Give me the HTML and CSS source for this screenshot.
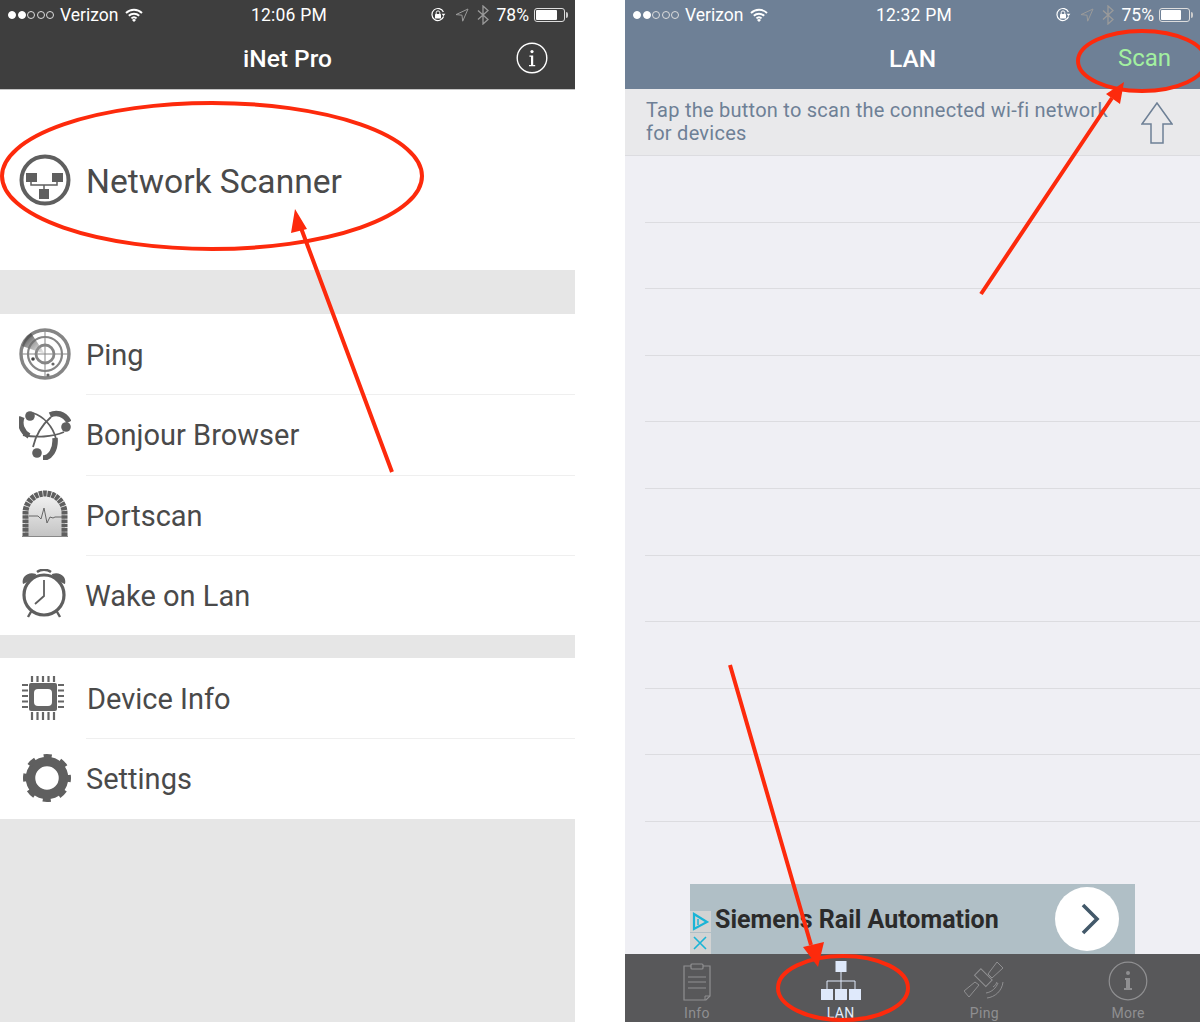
FILE: index.html
```html
<!DOCTYPE html>
<html lang="en">
<head>
    <meta charset="UTF-8">
    <title>iNet Pro</title>
    <link rel="stylesheet" href="styles.css">
</head>
<body>
    <svg class="defs" width="0" height="0">
        <symbol id="wifi" viewBox="0 0 18 14">
            <path d="M1 5a11.500 11.500 0 0 1 16 0M3.800 7.800a7.600 7.600 0 0 1 10.400 0M6.400 10.400a3.800 3.800 0 0 1 5.200 0" fill="none" stroke="currentColor" stroke-width="1.900"/>
            <path d="M9 14l-2-2a2.800 2.800 0 0 1 4 0z" fill="currentColor"/>
        </symbol>
        <symbol id="lock" viewBox="0 0 16 16">
            <path d="M13.600 9.500A6 6 0 1 1 13.400 5" fill="none" stroke="currentColor" stroke-width="1.200"/>
            <path d="M11.600 6.800h3.800l-1.900 2.400z" fill="currentColor"/>
            <rect x="5" y="7" width="6" height="4.600" rx=".6" fill="currentColor"/>
            <path d="M6.200 7V5.700a1.800 1.800 0 0 1 3.600 0V7" fill="none" stroke="currentColor"/>
        </symbol>
        <symbol id="locate" viewBox="0 0 14 14">
            <path d="M13 1L1 6.600l6 .6.700 6z" fill="none" stroke="currentColor"/>
        </symbol>
        <symbol id="bt" viewBox="0 0 12 20">
            <path d="M1 5.500l10 9-5 4.500V1l5 4.500-10 9" fill="none" stroke="currentColor" stroke-width="1.300"/>
        </symbol>
    </svg>

    <main class="shots">
        <section class="phone">
            <header class="top top-dark">
                <div class="status">
                    <div class="status-left">
                        <span class="dots"><i class="on"></i><i class="on"></i><i></i><i></i><i></i></span>
                        <span>Verizon</span>
                        <svg class="wifi"><use href="#wifi"/></svg>
                    </div>
                    <div class="status-time">12:06 PM</div>
                    <div class="status-right">
                        <svg class="ic-lock"><use href="#lock"/></svg>
                        <svg class="ic-locate"><use href="#locate"/></svg>
                        <svg class="ic-bt"><use href="#bt"/></svg>
                        <span>78%</span>
                        <span class="battery"><b style="width: 78%"></b></span>
                    </div>
                </div>
                <div class="nav">
                    <h1>iNet Pro</h1>
                    <svg class="nav-info" viewBox="0 0 32 32">
                        <circle cx="16" cy="16" r="14.800" fill="none" stroke="#fff" stroke-width="1.400"/>
                        <circle cx="16" cy="9.600" r="1.600" fill="#fff"/>
                        <path d="M13.400 13.600h3.800v9.400h2v1.200h-6.200V23h2v-8.200h-1.600z" fill="#fff"/>
                    </svg>
                </div>
            </header>

            <div class="scanner-row">
                <svg class="icon" viewBox="0 0 52 52">
                    <circle cx="26" cy="26" r="23.500" fill="none" stroke="#5f5f5f" stroke-width="4"/>
                    <path d="M12 24v7h26v-7M25 31v5" fill="none" stroke="#5f5f5f" stroke-width="1.500"/>
                    <rect x="7" y="19" width="11" height="9" fill="#5f5f5f"/>
                    <rect x="33" y="19" width="11" height="9" fill="#5f5f5f"/>
                    <rect x="20" y="35" width="10" height="10" fill="#5f5f5f"/>
                </svg>
                <span>Network Scanner</span>
            </div>

            <div class="gap gap-big"></div>

            <ul class="menu">
                <li>
                    <svg class="icon" viewBox="0 0 52 52">
                        <defs>
                            <linearGradient id="sweep" x1="0" y1="0" x2="1" y2="1">
                                <stop offset="0" stop-color="#2c2c2c"/>
                                <stop offset="1" stop-color="#bbb" stop-opacity=".3"/>
                            </linearGradient>
                            <linearGradient id="tunnel" x1="0" y1="0" x2="0" y2="1">
                                <stop offset="0" stop-color="#f4f4f4"/>
                                <stop offset="1" stop-color="#c4c4c4"/>
                            </linearGradient>
                        </defs>
                        <g fill="none" stroke="#858585">
                            <circle cx="26" cy="26" r="24" stroke-width="3.400"/>
                            <circle cx="26" cy="26" r="17" stroke-width="2.200"/>
                            <circle cx="26" cy="26" r="9" stroke-width="2.800"/>
                            <path d="M26 2v48M2 26h48" stroke-width="1"/>
                        </g>
                        <path d="M26 26L3 18a25 25 0 0 1 9-13z" fill="url(#sweep)"/>
                        <circle cx="14" cy="31" r="1.800" fill="#444"/>
                        <circle cx="34" cy="36" r="1.600" fill="#666"/>
                        <circle cx="29" cy="47" r="1.600" fill="#666"/>
                    </svg>
                    <span>Ping</span>
                </li>
                <li>
                    <svg class="icon" viewBox="0 0 52 52">
                        <g fill="none" stroke="#5f5f5f">
                            <path d="M3 9C0 16 3 24 10 28M31 7c6-3 14-2 19 7M24 50c7 0 13-8 12-20" stroke-width="5.500"/>
                            <path d="M14 5c10 3 20 13 23 26M32 9C24 16 17 26 14 39M4 27c13 3 29 2 41-3" stroke-width="1.800"/>
                        </g>
                        <circle cx="11" cy="8" r="4.800" fill="#5f5f5f"/>
                        <circle cx="47" cy="19" r="4.800" fill="#5f5f5f"/>
                        <circle cx="18" cy="45" r="4.800" fill="#5f5f5f"/>
                    </svg>
                    <span>Bonjour Browser</span>
                </li>
                <li>
                    <svg class="icon" viewBox="0 0 52 52">
                        <path d="M6 47V24a20 20 0 0 1 40 0v23z" fill="url(#tunnel)"/>
                        <path d="M6.500 47V24a19.500 19.500 0 0 1 39 0v23" fill="none" stroke="#5f5f5f" stroke-width="6" stroke-dasharray="3.600 .7"/>
                        <path d="M3 47.500h46" stroke="#888" stroke-width="1"/>
                        <path d="M10 27h9l3 3 3-11 3 15 3-6 3 1 2-1h8" fill="none" stroke="#666"/>
                    </svg>
                    <span>Portscan</span>
                </li>
                <li class="row-wake">
                    <svg class="icon" viewBox="0 0 52 52">
                        <circle cx="25" cy="26" r="20" fill="none" stroke="#5f5f5f" stroke-width="3.200"/>
                        <path d="M25 11v16l-9 8" fill="none" stroke="#5f5f5f" stroke-width="1.800"/>
                        <path d="M4 15c-2-7 5-13 13-10 1 1-9 9-13 10zM46 15c2-7-5-13-13-10-1 1 9 9 13 10z" fill="#5f5f5f"/>
                        <path d="M18 3c4-3 10-3 14 0M13 41l-4 7M37 41l4 7" fill="none" stroke="#5f5f5f" stroke-width="2.400"/>
                    </svg>
                    <span>Wake on Lan</span>
                </li>
            </ul>

            <div class="gap gap-small"></div>

            <ul class="menu">
                <li class="row-device">
                    <svg class="icon" viewBox="0 0 52 52">
                        <path d="M13 4v44M18.500 4v44M24 4v44M29.500 4v44M35 4v44M3 13h42M3 18.500h42M3 24h42M3 29.500h42M3 35h42" stroke="#666" stroke-width="2.200"/>
                        <rect x="9" y="10" width="30" height="30" rx="2" fill="#fff"/>
                        <rect x="10" y="11" width="28" height="28" rx="2" fill="#666"/>
                        <rect x="15" y="17" width="18" height="17" rx="4" fill="#fff"/>
                    </svg>
                    <span>Device Info</span>
                </li>
                <li>
                    <svg class="icon" viewBox="0 0 52 52">
                        <circle cx="28" cy="26" r="16.500" fill="none" stroke="#5f5f5f" stroke-width="9.500"/>
                        <circle cx="28" cy="26" r="21.500" fill="none" stroke="#5f5f5f" stroke-width="5" stroke-dasharray="8 8.890" stroke-dashoffset="4"/>
                    </svg>
                    <span>Settings</span>
                </li>
            </ul>

            <div class="gap gap-fill"></div>
        </section>

        <section class="phone phone-lan">
            <header class="top top-blue">
                <div class="status">
                    <div class="status-left">
                        <span class="dots"><i class="on"></i><i class="on"></i><i></i><i></i><i></i></span>
                        <span>Verizon</span>
                        <svg class="wifi"><use href="#wifi"/></svg>
                    </div>
                    <div class="status-time">12:32 PM</div>
                    <div class="status-right">
                        <svg class="ic-lock"><use href="#lock"/></svg>
                        <svg class="ic-locate"><use href="#locate"/></svg>
                        <svg class="ic-bt"><use href="#bt"/></svg>
                        <span>75%</span>
                        <span class="battery"><b style="width: 75%"></b></span>
                    </div>
                </div>
                <div class="nav">
                    <h1>LAN</h1>
                    <span class="scan-btn">Scan</span>
                </div>
            </header>

            <div class="hint">
                <p>Tap the button to scan the connected wi-fi network for devices</p>
                <svg class="hint-arrow" viewBox="0 0 32 42">
                    <path d="M16 1L1 22h9v19h12V22h9z" fill="none" stroke="#6e8096" stroke-width="1.500"/>
                </svg>
            </div>

            <div class="lan-list">
                <div class="lan-row"></div>
                <div class="lan-row"></div>
                <div class="lan-row"></div>
                <div class="lan-row"></div>
                <div class="lan-row"></div>
                <div class="lan-row"></div>
                <div class="lan-row"></div>
                <div class="lan-row"></div>
                <div class="lan-row"></div>
                <div class="lan-row"></div>

                <div class="ad">
                    <div class="ad-choices">
                        <span class="ad-box">
                            <svg viewBox="0 0 20 20" width="20" height="20">
                                <path d="M4 3l13 8-13 7z" fill="none" stroke="#19b4d6" stroke-width="2.200"/>
                                <path d="M8 8v6" stroke="#19b4d6" stroke-width="1.500"/>
                            </svg>
                        </span>
                        <span class="ad-box">
                            <svg viewBox="0 0 20 20" width="20" height="20">
                                <path d="M4 4l12 12M16 4L4 16" stroke="#19b4d6" stroke-width="1.600"/>
                            </svg>
                        </span>
                    </div>
                    <span class="ad-title">Siemens Rail Automation</span>
                    <span class="ad-go">
                        <svg class="ad-chevron" viewBox="0 0 20 32" width="20" height="32">
                            <path d="M3 2l14 14L3 30" fill="none" stroke="#43596a" stroke-width="3.600"/>
                        </svg>
                    </span>
                </div>
            </div>

            <nav class="tabs">
                <div class="tab">
                    <svg viewBox="0 0 30 38" width="30" height="38">
                        <path d="M9 3H2v34h22l4-4V3h-7" fill="none" stroke="currentColor" stroke-width="1.200"/>
                        <rect x="9" y="1" width="12" height="5" rx="1" fill="none" stroke="currentColor" stroke-width="1.200"/>
                        <path d="M6 14h18M6 19h18M6 25h18" stroke="currentColor" stroke-width="1.200"/>
                        <path d="M23 37v-4h5" fill="none" stroke="currentColor"/>
                    </svg>
                    <span>Info</span>
                </div>
                <div class="tab tab-on">
                    <svg viewBox="0 0 40 40" width="40" height="40">
                        <rect x="14.500" y="0" width="11" height="11" fill="#dfe9fb"/>
                        <path d="M20 11v18M6 28v-8h28v8" fill="none" stroke="#dfe9fb" stroke-width="1"/>
                        <rect x="0" y="28" width="12" height="11" fill="#dfe9fb"/>
                        <rect x="14" y="28" width="12" height="11" fill="#dfe9fb"/>
                        <rect x="28" y="28" width="12" height="11" fill="#dfe9fb"/>
                    </svg>
                    <span>LAN</span>
                </div>
                <div class="tab">
                    <svg viewBox="0 0 40 40" width="40" height="40">
                        <path d="M24 13L33 1l6 6-11 10zM15 24L5 36l-5-6 11-9z" fill="none" stroke="currentColor" stroke-width="1"/>
                        <rect x="11" y="12" width="16" height="9" transform="rotate(45 19 17)" fill="none" stroke="currentColor" stroke-width="1"/>
                        <path d="M29 26a8 8 0 0 0 4-5M23 37c8-1 15-7 16-16M22 32c6-1 10-5 12-10" fill="none" stroke="currentColor" stroke-width="1"/>
                    </svg>
                    <span>Ping</span>
                </div>
                <div class="tab">
                    <svg viewBox="0 0 40 40" width="40" height="40">
                        <circle cx="20" cy="20" r="18.800" fill="none" stroke="currentColor" stroke-width="1.200"/>
                        <circle cx="20" cy="12" r="2" fill="currentColor"/>
                        <path d="M17 17h5v10h2v2h-8v-2h2v-8h-1z" fill="currentColor"/>
                    </svg>
                    <span>More</span>
                </div>
            </nav>
        </section>

        <svg class="marks" viewBox="0 0 1200 1022" width="1200" height="1022">
            <g fill="none" stroke="#fd2a0c" stroke-width="4">
                <ellipse cx="212" cy="176" rx="210" ry="73"/>
                <ellipse cx="1142" cy="61" rx="64" ry="30"/>
                <ellipse cx="843" cy="988" rx="65" ry="32"/>
                <path d="M392 472L301 228M981 294L1112 98M730 665L811 945"/>
            </g>
            <path d="M295 209l12 20-16 4zM1124 82l-4 22-14-10zM818 967l-15-20 21-5z" fill="#fd2a0c"/>
        </svg>
    </main>
</body>
</html>
```

FILE: styles.css
```css
* {
    box-sizing: border-box;
}
html, body {
    margin: 0;
    height: 1022px;
    overflow: hidden;
}
body {
    font-family: "Roboto", "Liberation Sans", sans-serif;
    background: #fff;
    color: #4a4a4a;
}
.defs {
    position: absolute;
}
.shots {
    position: relative;
    display: flex;
    justify-content: space-between;
    width: 1200px;
    height: 1022px;
}
.phone {
    display: flex;
    flex-direction: column;
    width: 575px;
    height: 1022px;
}
.marks {
    position: absolute;
    left: 0;
    top: 0;
}

/* header */
.top {
    flex: none;
    height: 90px;
    color: #fff;
}
.top-dark {
    background: #3e3e3e;
    border-bottom: 1px solid #c4c4c4;
}
.top-blue {
    height: 89px;
    background: #6e8096;
}
.status {
    display: grid;
    grid-template-columns: 1fr auto 1fr;
    align-items: center;
    height: 29px;
    padding: 0 8px;
    font-size: 17.500px;
}
.status-left, .status-right {
    display: flex;
    align-items: center;
}
.status-right {
    justify-content: flex-end;
}
.status-time {
    padding-left: 3px;
    letter-spacing: .25px;
}
.dots {
    display: flex;
    gap: 1.500px;
    margin-right: 6px;
}
.dots i {
    width: 8px;
    height: 8px;
    border: 1px solid #ddd;
    border-radius: 50%;
}
.dots i.on {
    background: #fff;
    border-color: #fff;
}
.wifi {
    width: 18px;
    height: 14px;
    margin-left: 7px;
}
.ic-lock {
    width: 16px;
    height: 16px;
    margin-right: 9px;
}
.ic-locate {
    width: 14px;
    height: 14px;
    margin-right: 8px;
    color: #9a9a9a;
}
.ic-bt {
    width: 12px;
    height: 20px;
    margin-right: 8px;
    color: #9a9a9a;
}
.battery {
    position: relative;
    width: 31px;
    height: 14px;
    margin-left: 5px;
    margin-right: 2px;
    border: 1px solid #ddd;
    border-radius: 3px;
    padding: 1px;
}
.battery b {
    display: block;
    height: 100%;
    background: #fff;
    border-radius: 1px;
}
.battery::after {
    content: "";
    position: absolute;
    right: -4px;
    top: 3px;
    width: 2px;
    height: 6px;
    background: #ccc;
    border-radius: 0 2px 2px 0;
}
.nav {
    position: relative;
    display: flex;
    align-items: center;
    justify-content: center;
    height: 60px;
}
.nav h1 {
    margin: 0 0 2px;
    font-size: 24.500px;
    font-weight: 500;
}
.nav-info {
    position: absolute;
    right: 27px;
    top: 13px;
    width: 32px;
    height: 32px;
}
.scan-btn {
    position: absolute;
    right: 29px;
    top: 15px;
    font-size: 24px;
    color: #a3f0a0;
}

/* left screen */
.scanner-row {
    display: flex;
    align-items: center;
    flex: none;
    height: 180px;
    padding-left: 19px;
    font-size: 33.600px;
}
.scanner-row .icon {
    margin-right: 15px;
}
.scanner-row span, .menu span {
    margin-top: 2px;
}
.icon {
    flex: none;
    width: 52px;
    height: 52px;
}
.gap {
    background: #e6e6e6;
}
.gap-big {
    flex: none;
    height: 44px;
}
.gap-small {
    flex: none;
    height: 23px;
}
.gap-fill {
    flex: 1;
}
.menu {
    margin: 0;
    padding: 0;
    list-style: none;
}
.menu li {
    position: relative;
    display: flex;
    align-items: center;
    gap: 15px;
    height: 80.250px;
    padding-left: 19px;
    font-size: 29px;
}
.menu li + li::before {
    content: "";
    position: absolute;
    left: 86px;
    right: 0;
    top: 0;
    border-top: 1px solid #efefef;
}
.menu .row-wake {
    gap: 14px;
}
.menu .row-device {
    gap: 16px;
}

/* right screen */
.hint {
    display: flex;
    flex: none;
    align-items: center;
    justify-content: space-between;
    height: 67px;
    padding: 0 27px 0 21px;
    background: #e9e9eb;
    border-bottom: 1px solid #dcdce0;
    color: #6e8096;
}
.hint p {
    width: 468px;
    margin: 0;
    font-size: 20px;
    line-height: 23px;
    letter-spacing: .25px;
}
.hint-arrow {
    width: 32px;
    height: 42px;
    margin-top: 1px;
}
.lan-list {
    display: flex;
    flex: 1;
    flex-direction: column;
    background: #efeff4;
}
.lan-row {
    flex: none;
    height: 66.600px;
    margin-left: 20px;
    border-bottom: 1px solid #dcdce0;
}
.ad {
    position: relative;
    display: flex;
    align-items: center;
    width: 445px;
    height: 70px;
    margin: auto 0 0 65px;
    padding-left: 25px;
    background: #b0bfc6;
}
.ad-choices {
    position: absolute;
    left: 0;
    bottom: 0;
    display: flex;
    flex-direction: column;
    gap: 1px;
}
.ad-box {
    display: flex;
    width: 21px;
    height: 21px;
    background: #d2d3d3;
}
.ad-title {
    flex: 1;
    font-size: 25px;
    font-weight: 700;
    color: #2b2b2b;
}
.ad-go {
    display: flex;
    align-items: center;
    justify-content: center;
    width: 64px;
    height: 64px;
    margin-right: 16px;
    background: #fff;
    border-radius: 50%;
}
.ad-chevron {
    margin-left: 5px;
}
.tabs {
    display: flex;
    flex: none;
    height: 68px;
    background: #58585a;
}
.tab {
    display: flex;
    flex: 1;
    flex-direction: column;
    align-items: center;
    justify-content: flex-end;
    gap: 4px;
    padding-bottom: 1px;
    font-size: 14px;
    letter-spacing: .3px;
    color: #8f8f91;
}
.tab-on {
    color: #e4ecfa;
}
```
